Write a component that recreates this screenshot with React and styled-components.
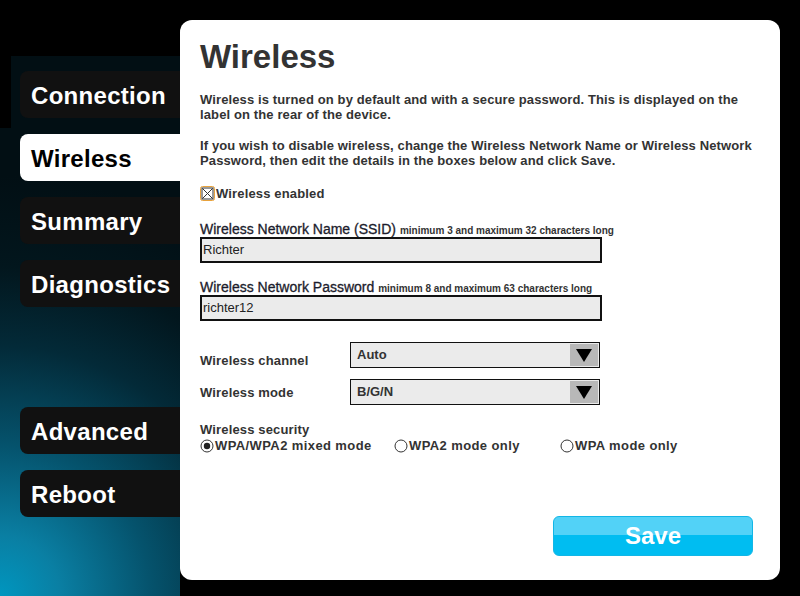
import React from "react";
import styled, { createGlobalStyle } from "styled-components";

const Global = createGlobalStyle`
  html, body { margin: 0; padding: 0; background: #000; }
  body { font-family: "Liberation Sans", Arial, sans-serif; }
  * { box-sizing: border-box; }
`;

const glow = `radial-gradient(circle at 0px 596px, #0096bf 0px, #0a7fa3 60px, #05536d 150px, #032a38 250px, #02161d 330px, #020f14 420px)`;

const Page = styled.div`
  position: relative;
  width: 800px;
  height: 596px;
  display: flex;
  overflow: hidden;
  background: #000;
`;

const Sidebar = styled.nav`
  position: relative;
  margin-top: 56px;
  margin-left: 11px;
  width: 169px;
  padding-top: 15px;
  padding-left: 9px;
  display: flex;
  flex-direction: column;
  gap: 16px;
  background: ${glow};
  background-attachment: fixed;
  &::before {
    content: "";
    position: absolute;
    left: -11px;
    top: 72px;
    width: 11px;
    bottom: 0;
    background: ${glow};
    background-attachment: fixed;
  }
`;

const NavItem = styled.div`
  height: 47px;
  line-height: 47px;
  padding-left: 11px;
  padding-top: 1px;
  border-radius: 8px 0 0 8px;
  font-size: 24px;
  font-weight: bold;
  letter-spacing: 0.3px;
  background: ${(p) => (p.$active ? "#fff" : "#111")};
  color: ${(p) => (p.$active ? "#000" : "#fff")};
  margin-top: ${(p) => (p.$gapBefore ? "84px" : "0")};
`;

const Panel = styled.main`
  margin-top: 20px;
  width: 600px;
  height: 560px;
  background: #fff;
  border-radius: 12px;
  padding: 18px 20px 24px 20px;
  display: flex;
  flex-direction: column;
  color: #333;
`;

const Title = styled.h1`
  margin: 0;
  font-size: 33px;
  line-height: 38px;
  font-weight: bold;
  color: #333;
`;

const Para = styled.p`
  margin: 16px 0 0 0;
  font-size: 13px;
  line-height: 15px;
  font-weight: bold;
  letter-spacing: 0.12px;
  color: #333;
`;

const CheckRow = styled.label`
  margin-top: 17px;
  display: flex;
  align-items: center;
  gap: 1px;
  height: 16px;
  font-size: 13px;
  font-weight: bold;
  letter-spacing: 0.15px;
  color: #333;
`;

const FieldLabel = styled.div`
  margin-top: ${(p) => p.$mt};
  height: 17px;
  font-size: 14px;
  line-height: 18px;
  color: #1c1c2c;
  -webkit-text-stroke: 0.3px #1c1c2c;
  white-space: nowrap;
`;

const Hint = styled.span`
  font-size: 10px;
  line-height: 10px;
  font-weight: bold;
  color: #333;
  -webkit-text-stroke: 0;
`;

const TextBox = styled.div`
  width: 402px;
  height: 26px;
  border: 2px solid #111;
  background: #ebebeb;
  padding-left: 1px;
  font-size: 13px;
  line-height: 22px;
  color: #222;
`;

const SelectRow = styled.div`
  margin-top: ${(p) => p.$mt};
  display: grid;
  grid-template-columns: 150px 250px;
  align-items: center;
`;

const RowLabel = styled.div`
  font-size: 13px;
  font-weight: bold;
  letter-spacing: 0.15px;
  color: #333;
  padding-top: ${(p) => p.$shift || "0"};
`;

const SelectBox = styled.div`
  height: 26px;
  border: 1px solid #111;
  background: #ebebeb;
  display: flex;
  align-items: stretch;
`;

const SelectValue = styled.div`
  flex: 1;
  padding-left: 6px;
  font-size: 13px;
  font-weight: bold;
  line-height: 24px;
  color: #333;
`;

const Arrow = styled.div`
  width: 28px;
  margin: 1px;
  background: #b8b8b8;
  display: flex;
  align-items: center;
  justify-content: center;
`;

const SecLabel = styled.div`
  margin-top: 17px;
  font-size: 13px;
  font-weight: bold;
  letter-spacing: 0.15px;
  line-height: 15px;
  color: #333;
`;

const RadioRow = styled.div`
  margin-top: 1px;
  display: grid;
  grid-template-columns: 194px 166px auto;
  font-size: 13px;
  font-weight: bold;
  letter-spacing: 0.4px;
  color: #333;
  line-height: 16px;
`;

const RadioItem = styled.label`
  display: flex;
  align-items: center;
  gap: 1px;
`;

const SaveButton = styled.button`
  margin-top: auto;
  align-self: flex-end;
  margin-right: 7px;
  width: 200px;
  height: 40px;
  border: 1px solid #12b6e6;
  border-radius: 6px;
  background: linear-gradient(to bottom, #52d2f7 0%, #52d2f7 48%, #00bdf1 48%, #00bdf1 100%);
  color: #fff;
  font-family: "Liberation Sans", Arial, sans-serif;
  font-size: 24px;
  font-weight: bold;
  padding: 0;
`;

const CheckIcon = () => (
  <svg width="15" height="15" viewBox="0 0 15 15">
    <rect x="0.5" y="0.5" width="14" height="14" rx="2" fill="none" stroke="#e8a23c" />
    <rect x="2" y="2" width="11" height="11" fill="#fff" stroke="#333" />
    <path d="M2.5 2.5 L12.5 12.5 M12.5 2.5 L2.5 12.5" stroke="#333" strokeWidth="1" />
  </svg>
);

const RadioIcon = ({ on }) => (
  <svg width="14" height="14" viewBox="0 0 14 14">
    <circle cx="7" cy="7" r="6" fill="#fff" stroke="#333" strokeWidth="1" />
    {on && <circle cx="7" cy="7" r="3.2" fill="#222" />}
  </svg>
);

const Tri = () => (
  <svg width="16" height="14" viewBox="0 0 16 14">
    <path d="M0 1 L16 1 L8 14 Z" fill="#000" />
  </svg>
);

export default function App() {
  return (
    <Page>
      <Global />
      <Sidebar>
        <NavItem>Connection</NavItem>
        <NavItem $active>Wireless</NavItem>
        <NavItem>Summary</NavItem>
        <NavItem>Diagnostics</NavItem>
        <NavItem $gapBefore>Advanced</NavItem>
        <NavItem>Reboot</NavItem>
      </Sidebar>
      <Panel>
        <Title>Wireless</Title>
        <Para>
          Wireless is turned on by default and with a secure password. This is displayed on the label on the rear of the device.
        </Para>
        <Para>
          If you wish to disable wireless, change the Wireless Network Name or Wireless Network Password, then edit the details in the boxes below and click Save.
        </Para>
        <CheckRow>
          <CheckIcon />
          Wireless enabled
        </CheckRow>
        <FieldLabel $mt="19px">
          Wireless Network Name (SSID) <Hint>minimum 3 and maximum 32 characters long</Hint>
        </FieldLabel>
        <TextBox>Richter</TextBox>
        <FieldLabel $mt="15px">
          Wireless Network Password <Hint>minimum 8 and maximum 63 characters long</Hint>
        </FieldLabel>
        <TextBox>richter12</TextBox>
        <SelectRow $mt="21px">
          <RowLabel $shift="10px">Wireless channel</RowLabel>
          <SelectBox>
            <SelectValue>Auto</SelectValue>
            <Arrow><Tri /></Arrow>
          </SelectBox>
        </SelectRow>
        <SelectRow $mt="11px">
          <RowLabel>Wireless mode</RowLabel>
          <SelectBox>
            <SelectValue>B/G/N</SelectValue>
            <Arrow><Tri /></Arrow>
          </SelectBox>
        </SelectRow>
        <SecLabel>Wireless security</SecLabel>
        <RadioRow>
          <RadioItem><RadioIcon on />WPA/WPA2 mixed mode</RadioItem>
          <RadioItem><RadioIcon />WPA2 mode only</RadioItem>
          <RadioItem><RadioIcon />WPA mode only</RadioItem>
        </RadioRow>
        <SaveButton>Save</SaveButton>
      </Panel>
    </Page>
  );
}
